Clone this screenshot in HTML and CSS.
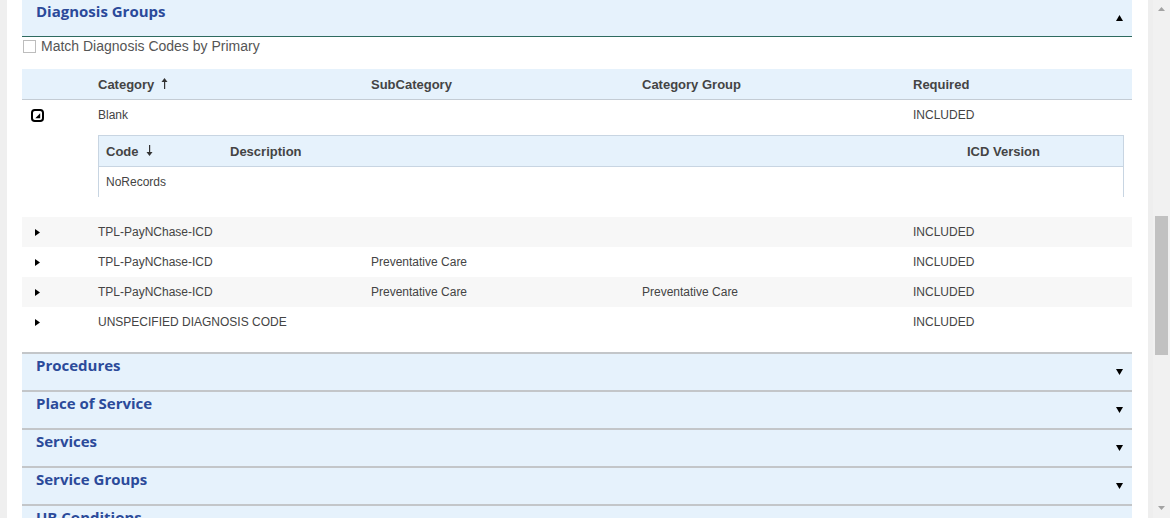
FILE: index.html
```html
<!DOCTYPE html>
<html lang="en">
<head>
<meta charset="utf-8">
<title>Diagnosis Groups</title>
<link rel="stylesheet" href="styles.css">
</head>
<body>
<div class="page">
  <div class="gutter-left"></div>
  <main class="panel">
    <section class="acc">
      <div class="acc-head open">
        <span class="acc-title">Diagnosis Groups</span>
        <svg class="caret" width="7" height="6" viewBox="0 0 7 6"><polygon points="0,6 3.5,0 7,6" fill="#000"/></svg>
      </div>
      <div class="acc-body">
        <label class="chk"><span class="box"></span><span class="chk-text">Match Diagnosis Codes by Primary</span></label>
        <div class="grid">
          <div class="row head">
            <div class="cell exp"></div>
            <div class="cell">Category
              <svg class="sort" width="7" height="11" viewBox="0 0 7 11"><polygon points="0.5,4 3.5,0 6.5,4" fill="#333"/><rect x="3" y="3" width="1.2" height="8" fill="#333"/></svg>
            </div>
            <div class="cell">SubCategory</div>
            <div class="cell">Category Group</div>
            <div class="cell">Required</div>
          </div>
          <div class="row">
            <div class="cell exp">
              <svg class="collapse" width="13" height="13" viewBox="0 0 13 13"><rect x="1" y="1" width="11" height="11" rx="2.8" fill="none" stroke="#000" stroke-width="2"/><polygon points="9.2,4.3 9.2,9.2 4.3,9.2" fill="#000"/></svg>
            </div>
            <div class="cell">Blank</div>
            <div class="cell"></div>
            <div class="cell"></div>
            <div class="cell">INCLUDED</div>
          </div>
          <div class="detail">
            <div class="sub">
              <div class="srow shead">
                <div class="cell">Code
                  <svg class="sort" width="7" height="11" viewBox="0 0 7 11"><polygon points="0.5,7 3.5,11 6.5,7" fill="#333"/><rect x="3" y="0" width="1.2" height="8" fill="#333"/></svg>
                </div>
                <div class="cell">Description</div>
                <div class="cell">ICD Version</div>
              </div>
              <div class="srow sbody">
                <div class="cell">NoRecords</div>
                <div class="cell"></div>
                <div class="cell"></div>
              </div>
            </div>
          </div>
          <div class="row alt">
            <div class="cell exp"><svg class="tri" width="5" height="7" viewBox="0 0 5 7"><polygon points="0,0 5,3.5 0,7" fill="#000"/></svg></div>
            <div class="cell">TPL-PayNChase-ICD</div>
            <div class="cell"></div>
            <div class="cell"></div>
            <div class="cell">INCLUDED</div>
          </div>
          <div class="row">
            <div class="cell exp"><svg class="tri" width="5" height="7" viewBox="0 0 5 7"><polygon points="0,0 5,3.5 0,7" fill="#000"/></svg></div>
            <div class="cell">TPL-PayNChase-ICD</div>
            <div class="cell">Preventative Care</div>
            <div class="cell"></div>
            <div class="cell">INCLUDED</div>
          </div>
          <div class="row alt">
            <div class="cell exp"><svg class="tri" width="5" height="7" viewBox="0 0 5 7"><polygon points="0,0 5,3.5 0,7" fill="#000"/></svg></div>
            <div class="cell">TPL-PayNChase-ICD</div>
            <div class="cell">Preventative Care</div>
            <div class="cell">Preventative Care</div>
            <div class="cell">INCLUDED</div>
          </div>
          <div class="row">
            <div class="cell exp"><svg class="tri" width="5" height="7" viewBox="0 0 5 7"><polygon points="0,0 5,3.5 0,7" fill="#000"/></svg></div>
            <div class="cell">UNSPECIFIED DIAGNOSIS CODE</div>
            <div class="cell"></div>
            <div class="cell"></div>
            <div class="cell">INCLUDED</div>
          </div>
        </div>
      </div>
    </section>

    <div class="closed-list">
      <div class="acc-head closed">
        <span class="acc-title">Procedures</span>
        <svg class="caret down" width="7" height="6" viewBox="0 0 7 6"><polygon points="0,0 7,0 3.5,6" fill="#000"/></svg>
      </div>
      <div class="acc-head closed">
        <span class="acc-title">Place of Service</span>
        <svg class="caret down" width="7" height="6" viewBox="0 0 7 6"><polygon points="0,0 7,0 3.5,6" fill="#000"/></svg>
      </div>
      <div class="acc-head closed">
        <span class="acc-title">Services</span>
        <svg class="caret down" width="7" height="6" viewBox="0 0 7 6"><polygon points="0,0 7,0 3.5,6" fill="#000"/></svg>
      </div>
      <div class="acc-head closed">
        <span class="acc-title">Service Groups</span>
        <svg class="caret down" width="7" height="6" viewBox="0 0 7 6"><polygon points="0,0 7,0 3.5,6" fill="#000"/></svg>
      </div>
      <div class="acc-head closed">
        <span class="acc-title">UB Conditions</span>
        <svg class="caret down" width="7" height="6" viewBox="0 0 7 6"><polygon points="0,0 7,0 3.5,6" fill="#000"/></svg>
      </div>
    </div>
  </main>
  <div class="gutter-right"></div>
  <div class="scrollbar">
    <svg class="sb-arrow" width="7" height="4" viewBox="0 0 7 4"><polygon points="0,4 3.5,0 7,4" fill="#a3a3a3"/></svg>
    <div class="sb-track"><div class="sb-thumb"></div></div>
    <svg class="sb-arrow" width="7" height="4" viewBox="0 0 7 4"><polygon points="0,0 7,0 3.5,4" fill="#a3a3a3"/></svg>
  </div>
</div>
</body>
</html>
```

FILE: styles.css
```css
* { box-sizing: border-box; }
html, body {
  margin: 0;
  padding: 0;
  height: 518px;
  overflow: hidden;
  background: #fff;
  font-family: "Liberation Sans", Arial, sans-serif;
}
.page {
  display: flex;
  height: 518px;
  overflow: hidden;
}
.gutter-left {
  width: 7px;
  flex: none;
  background: #efefef;
}
.gutter-right {
  width: 5px;
  flex: none;
  background: #eeeeee;
}
.panel {
  flex: 1;
  min-width: 0;
  background: #fff;
  padding: 0 16px 0 15px;
  overflow: hidden;
}
.acc-head {
  display: flex;
  justify-content: space-between;
  align-items: flex-start;
  height: 36px;
  background: #e6f2fc;
  padding: 0 9px 0 14px;
}
.acc-head.open {
  height: 37px;
  border-bottom: 1px solid #2e6b60;
}
.acc-head.closed {
  height: 38px;
  border-top: 2px solid #c3c6c9;
}
.acc-title {
  font-family: "Open Sans", "Noto Sans", sans-serif;
  font-weight: 700;
  font-size: 15px;
  line-height: 22px;
  color: #2b4a9a;
}
.caret {
  margin-top: 15px;
  display: block;
}
.chk {
  display: flex;
  align-items: flex-start;
  height: 19px;
  font-size: 14px;
  color: #555;
  padding-left: 1px;
}
.box {
  width: 13px;
  height: 13px;
  margin-top: 3px;
  border: 1px solid #bdbdbd;
  background: #fff;
  margin-right: 5px;
}
.chk-text {
  line-height: 18px;
}
.grid {
  margin-top: 13px;
}
.row {
  display: grid;
  grid-template-columns: 68px 273px 271px 271px 1fr;
  height: 30px;
  align-items: center;
  font-size: 12px;
  color: #444;
}
.row.alt {
  background: #f7f7f7;
}
.row.head {
  height: 31px;
  background: #e6f2fc;
  border-bottom: 1px solid #c4ccd4;
  font-size: 13px;
  font-weight: 700;
  color: #444;
}
.cell {
  padding-left: 8px;
  white-space: nowrap;
  display: flex;
  align-items: center;
}
.cell.exp {
  padding-left: 9px;
}
.sort {
  margin-left: 7px;
  margin-top: -2px;
}
.tri {
  margin-left: 4px;
  margin-top: 1px;
}
.detail {
  padding: 5px 8px 20px 76px;
}
.sub {
  border: 1px solid #c8d5e2;
  border-bottom: none;
}
.srow {
  display: grid;
  grid-template-columns: 124px 737px 1fr;
  height: 30px;
  align-items: center;
  font-size: 12px;
  color: #444;
}
.srow .cell {
  padding-left: 7px;
}
.srow.shead {
  height: 31px;
  background: #e6f2fc;
  border-bottom: 1px solid #c8d5e2;
  font-size: 13px;
  font-weight: 700;
}
.closed-list {
  margin-top: 15px;
}
.scrollbar {
  width: 17px;
  flex: none;
  background: #f1f1f1;
  display: flex;
  flex-direction: column;
  align-items: center;
  padding: 7px 0 8px;
}
.sb-arrow {
  display: block;
  flex: none;
}
.sb-track {
  flex: 1;
  width: 100%;
  padding-top: 205px;
  padding-bottom: 151px;
  display: flex;
  justify-content: center;
}
.sb-thumb {
  width: 13px;
  height: 100%;
  background: #c1c1c1;
}
```
